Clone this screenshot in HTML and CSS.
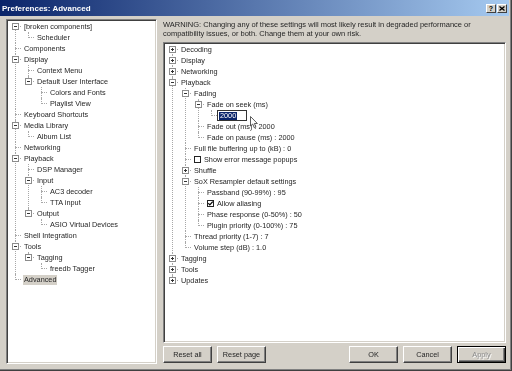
FILE: index.html
```html
<!DOCTYPE html>
<html lang="en">
<head>
    <meta charset="UTF-8">
    <title>Preferences: Advanced</title>
    <link rel="stylesheet" href="styles.css">
</head>
<body>
    <div class="window">
        <!-- Title Bar -->
        <div class="titlebar">
            <span class="title">Preferences: Advanced</span>
            <span class="tbtn">?</span>
            <span class="tbtn close">
                <svg width="6" height="5" viewBox="0 0 6 5"><path d="M0.5 0.5 L5.5 4.5 M5.5 0.5 L0.5 4.5" stroke="#000" stroke-width="1.3"/></svg>
            </span>
        </div>

        <div class="main">
            <!-- Page Tree -->
            <div class="sunken nav">
                <ul class="tree">
                    <li><div class="row"><i class="tg"></i><span>[broken components]</span></div>
                        <ul><li><div class="row"><span>Scheduler</span></div></li></ul>
                    </li>
                    <li><div class="row"><span>Components</span></div></li>
                    <li><div class="row"><i class="tg"></i><span>Display</span></div>
                        <ul>
                            <li><div class="row"><span>Context Menu</span></div></li>
                            <li><div class="row"><i class="tg"></i><span>Default User Interface</span></div>
                                <ul>
                                    <li><div class="row"><span>Colors and Fonts</span></div></li>
                                    <li><div class="row"><span>Playlist View</span></div></li>
                                </ul>
                            </li>
                        </ul>
                    </li>
                    <li><div class="row"><span>Keyboard Shortcuts</span></div></li>
                    <li><div class="row"><i class="tg"></i><span>Media Library</span></div>
                        <ul><li><div class="row"><span>Album List</span></div></li></ul>
                    </li>
                    <li><div class="row"><span>Networking</span></div></li>
                    <li><div class="row"><i class="tg"></i><span>Playback</span></div>
                        <ul>
                            <li><div class="row"><span>DSP Manager</span></div></li>
                            <li><div class="row"><i class="tg"></i><span>Input</span></div>
                                <ul>
                                    <li><div class="row"><span>AC3 decoder</span></div></li>
                                    <li><div class="row"><span>TTA input</span></div></li>
                                </ul>
                            </li>
                            <li><div class="row"><i class="tg"></i><span>Output</span></div>
                                <ul><li><div class="row"><span>ASIO Virtual Devices</span></div></li></ul>
                            </li>
                        </ul>
                    </li>
                    <li><div class="row"><span>Shell Integration</span></div></li>
                    <li><div class="row"><i class="tg"></i><span>Tools</span></div>
                        <ul>
                            <li><div class="row"><i class="tg"></i><span>Tagging</span></div>
                                <ul><li><div class="row"><span>freedb Tagger</span></div></li></ul>
                            </li>
                        </ul>
                    </li>
                    <li><div class="row"><span class="sel">Advanced</span></div></li>
                </ul>
            </div>

            <!-- Advanced Page -->
            <div class="page">
                <p class="warning">WARNING: Changing any of these settings will most likely result in degraded performance or<br>compatibility issues, or both. Change them at your own risk.</p>

                <div class="sunken settings">
                    <ul class="tree">
                        <li><div class="row"><i class="tg plus"></i><span>Decoding</span></div></li>
                        <li><div class="row"><i class="tg plus"></i><span>Display</span></div></li>
                        <li><div class="row"><i class="tg plus"></i><span>Networking</span></div></li>
                        <li><div class="row"><i class="tg"></i><span>Playback</span></div>
                            <ul>
                                <li><div class="row"><i class="tg"></i><span>Fading</span></div>
                                    <ul>
                                        <li><div class="row"><i class="tg"></i><span>Fade on seek (ms)</span></div>
                                            <ul><li><div class="row edit-row"><span class="edit"><span class="hl">2000</span></span></div></li></ul>
                                        </li>
                                        <li><div class="row"><span>Fade out (ms) : 2000</span></div></li>
                                        <li><div class="row"><span>Fade on pause (ms) : 2000</span></div></li>
                                    </ul>
                                </li>
                                <li><div class="row"><span>Full file buffering up to (kB) : 0</span></div></li>
                                <li><div class="row"><i class="cb"></i><span>Show error message popups</span></div></li>
                                <li><div class="row"><i class="tg plus"></i><span>Shuffle</span></div></li>
                                <li><div class="row"><i class="tg"></i><span>SoX Resampler default settings</span></div>
                                    <ul>
                                        <li><div class="row"><span>Passband (90-99%) : 95</span></div></li>
                                        <li><div class="row"><i class="cb"><svg width="5" height="5" viewBox="0 0 5 5"><path d="M0.3 2.2 L1.8 3.8 L4.7 0.6" fill="none" stroke="#000" stroke-width="1.2"/></svg></i><span>Allow aliasing</span></div></li>
                                        <li><div class="row"><span>Phase response (0-50%) : 50</span></div></li>
                                        <li><div class="row"><span>Plugin priority (0-100%) : 75</span></div></li>
                                    </ul>
                                </li>
                                <li><div class="row"><span>Thread priority (1-7) : 7</span></div></li>
                                <li><div class="row"><span>Volume step (dB) : 1.0</span></div></li>
                            </ul>
                        </li>
                        <li><div class="row"><i class="tg plus"></i><span>Tagging</span></div></li>
                        <li><div class="row"><i class="tg plus"></i><span>Tools</span></div></li>
                        <li><div class="row"><i class="tg plus"></i><span>Updates</span></div></li>
                    </ul>

                    <!-- mouse pointer -->
                    <svg class="pointer" width="9" height="13" viewBox="0 0 9 13">
                        <path d="M0.5 0.5 L0.5 10 L2.7 8 L4.3 11.8 L5.9 11.1 L4.4 7.5 L7.4 7.5 Z" fill="#fff" stroke="#333" stroke-width="0.8"/>
                    </svg>
                </div>

                <div class="buttons">
                    <button class="btn">Reset all</button>
                    <button class="btn">Reset page</button>
                    <div class="spacer"></div>
                    <button class="btn">OK</button>
                    <button class="btn">Cancel</button>
                    <button class="btn def" disabled>Apply</button>
                </div>
            </div>
        </div>
    </div>
</body>
</html>
```

FILE: styles.css
```css
/* General Styles */
body {
    margin: 0;
    padding: 0;
    background: #d4d0c8;
    font-family: 'Liberation Sans', Arial, sans-serif;
    font-size: 7.3px;
    color: #262626;
}

.window {
    width: 512px;
    height: 371px;
    box-sizing: border-box;
    padding: 0 2px 2px 0;
    border-right: 1px solid #404040;
    border-bottom: 1px solid #404040;
    box-shadow: inset -1px -1px #808080;
    overflow: hidden;
}

/* Title Bar */
.titlebar {
    height: 16px;
    display: flex;
    align-items: center;
    gap: 1px;
    padding: 0 2px;
    background: linear-gradient(90deg, #0a246a, #a6caf0);
}

.title {
    flex: 1;
    color: #fff;
    font-weight: bold;
    font-size: 8px;
    will-change: transform;
}

.tbtn {
    width: 10px;
    height: 9px;
    box-sizing: border-box;
    display: flex;
    align-items: center;
    justify-content: center;
    background: #d4d0c8;
    border: 1px solid;
    border-color: #fff #404040 #404040 #fff;
    font-weight: bold;
    font-size: 7px;
    color: #000;
}

/* Main Area */
.main {
    height: 348px;
    box-sizing: border-box;
    display: flex;
    gap: 6px;
    padding: 3px 3px 0 6px;
}

.sunken {
    box-sizing: border-box;
    padding: 1px;
    background: #fff;
    border: 1px solid;
    border-color: #808080 #fff #fff #808080;
    box-shadow: inset 1px 1px #404040, inset -1px -1px #d4d0c8;
}

.nav {
    width: 151px;
}

.page {
    flex: 1;
    display: flex;
    flex-direction: column;
}

/* grayscale text, like the reference */
.warning, .buttons {
    will-change: transform;
}

.warning {
    margin: 1px 0 4px;
    font-size: 7.5px;
    line-height: 9px;
    white-space: nowrap;
}

.settings {
    flex: 1;
    position: relative;
}

/* Tree View */
.tree, .tree ul {
    list-style: none;
    margin: 0;
    padding: 0;
}

.tree {
    position: relative;
    z-index: 0;
    padding-left: 7px;
    will-change: transform;
}

.tree ul {
    margin-left: 4px;
}

.tree li {
    position: relative;
    padding-left: 9px;
}

.tree li::before {
    content: "";
    position: absolute;
    z-index: -1;
    left: 0;
    top: 5px;
    width: 6px;
    border-top: 1px dotted #a8a8a8;
}

.tree li::after {
    content: "";
    position: absolute;
    z-index: -1;
    left: 0;
    top: 0;
    bottom: 0;
    border-left: 1px dotted #a8a8a8;
}

.tree li:last-child::after {
    bottom: auto;
    height: 6px;
}

.tree > li:first-child::after {
    top: 5px;
}

.row {
    height: 11px;
    display: flex;
    align-items: center;
    white-space: nowrap;
}

.tg {
    position: absolute;
    left: -3px;
    top: 2px;
    width: 7px;
    height: 7px;
    box-sizing: border-box;
    border: 1px solid #8c8c8c;
    background: #fff;
}

.tg::before {
    content: "";
    position: absolute;
    left: 1px;
    top: 2px;
    width: 3px;
    height: 1px;
    background: #333;
}

.tg.plus::after {
    content: "";
    position: absolute;
    left: 2px;
    top: 1px;
    width: 1px;
    height: 3px;
    background: #333;
}

.sel {
    background: #d4d0c8;
    padding: 0 1px;
    margin-left: -1px;
    line-height: 10px;
}

.cb {
    width: 7px;
    height: 7px;
    box-sizing: border-box;
    border: 1px solid #222;
    background: #fff;
    margin-right: 3px;
    display: flex;
    align-items: center;
    justify-content: center;
}

.edit-row {
    margin-left: -3px;
}

.edit {
    width: 30px;
    height: 11px;
    box-sizing: border-box;
    border: 1px solid #333;
    background: #fff;
    display: flex;
    align-items: center;
    padding-left: 1px;
}

.hl {
    background: #0a246a;
    color: #fff;
    line-height: 8px;
    padding: 0 1px;
}

.pointer {
    position: absolute;
    left: 86px;
    top: 73px;
}

/* Buttons */
.buttons {
    display: flex;
    gap: 5px;
    margin: 3px 0 1px;
}

.spacer {
    flex: 1;
}

.btn {
    width: 49px;
    height: 17px;
    padding: 0;
    background: #d4d0c8;
    border: 1px solid;
    border-color: #fff #404040 #404040 #fff;
    box-shadow: inset -1px -1px #808080, inset 1px 1px #d4d0c8;
    font-family: 'Liberation Sans', Arial, sans-serif;
    font-size: 7.3px;
    color: #262626;
}

.btn.def {
    border-color: #000;
    box-shadow: inset 1px 1px #fff, inset -1px -1px #404040, inset -2px -2px #808080;
    color: #8a8a8a;
    text-shadow: 1px 1px #fff;
}
```
